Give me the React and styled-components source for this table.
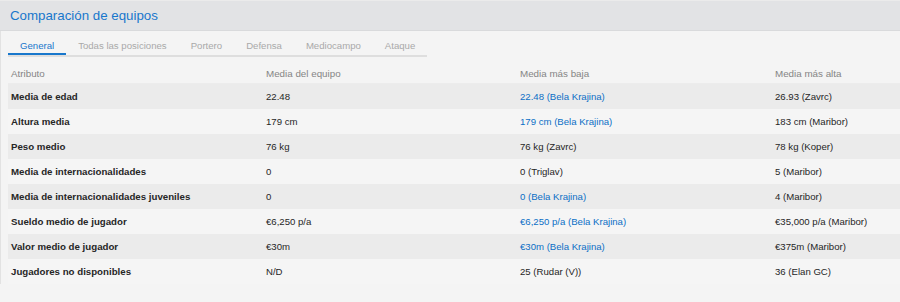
import React from 'react';
import styled, { createGlobalStyle } from 'styled-components';

const GlobalStyle = createGlobalStyle`
  html, body { margin: 0; padding: 0; background: #f4f4f4; }
  body { font-family: "Liberation Sans", Arial, sans-serif; }
`;

const tabs = ['General', 'Todas las posiciones', 'Portero', 'Defensa', 'Mediocampo', 'Ataque'];

const rows = [
  { attr: 'Media de edad', team: '22.48', low: '22.48 (Bela Krajina)', lowMine: true, high: '26.93 (Zavrc)' },
  { attr: 'Altura media', team: '179 cm', low: '179 cm (Bela Krajina)', lowMine: true, high: '183 cm (Maribor)' },
  { attr: 'Peso medio', team: '76 kg', low: '76 kg (Zavrc)', high: '78 kg (Koper)' },
  { attr: 'Media de internacionalidades', team: '0', low: '0 (Triglav)', high: '5 (Maribor)' },
  { attr: 'Media de internacionalidades juveniles', team: '0', low: '0 (Bela Krajina)', lowMine: true, high: '4 (Maribor)' },
  { attr: 'Sueldo medio de jugador', team: '€6,250 p/a', low: '€6,250 p/a (Bela Krajina)', lowMine: true, high: '€35,000 p/a (Maribor)' },
  { attr: 'Valor medio de jugador', team: '€30m', low: '€30m (Bela Krajina)', lowMine: true, high: '€375m (Maribor)' },
  { attr: 'Jugadores no disponibles', team: 'N/D', low: '25 (Rudar (V))', high: '36 (Elan GC)' },
];

export default function App() {
  return (
    <Panel>
      <GlobalStyle />
      <Header>
        <Title>Comparación de equipos</Title>
      </Header>
      <Body>
        <Tabs>
          {tabs.map((t, i) => (
            <Tab key={t} $active={i === 0}>{t}</Tab>
          ))}
        </Tabs>
        <Table>
          <HeadRow>
            <HeadCell>Atributo</HeadCell>
            <HeadCell>Media del equipo</HeadCell>
            <HeadCell>Media más baja</HeadCell>
            <HeadCell>Media más alta</HeadCell>
          </HeadRow>
          {rows.map((r, i) => (
            <Row key={r.attr} $odd={i % 2 === 0}>
              <Label>{r.attr}</Label>
              <Cell>{r.team}</Cell>
              <Cell $mine={r.lowMine}>{r.low}</Cell>
              <Cell>{r.high}</Cell>
            </Row>
          ))}
        </Table>
      </Body>
    </Panel>
  );
}

const Panel = styled.div`
  width: 900px;
  height: 302px;
  background: #f4f4f4;
  border-top: 1px solid #ebebeb;
  box-sizing: border-box;
  overflow: hidden;
`;

const Header = styled.div`
  height: 29px;
  background: #e2e3e5;
  border-bottom: 1px solid #d9dadc;
  display: flex;
  align-items: center;
  padding-left: 10px;
`;

const Title = styled.h2`
  margin: 0;
  font-size: 13.3px;
  font-weight: normal;
  color: #1877cc;
`;

const Body = styled.div`
  border-left: 1px solid #e2e2e2;
  padding: 6px 0 0 7px;
`;

const Tabs = styled.div`
  display: flex;
  width: fit-content;
  border-bottom: 2px solid #dedede;
  height: 18px;
`;

const Tab = styled.div`
  padding: 0 12px;
  font-size: 9.6px;
  line-height: 17px;
  white-space: nowrap;
  color: ${p => (p.$active ? '#1877cc' : '#a9a9a9')};
  border-bottom: 2px solid ${p => (p.$active ? '#1877cc' : 'transparent')};
`;

const Table = styled.div`
  margin-top: 7px;
`;

const grid = `
  display: grid;
  grid-template-columns: 255px 254px 255px 1fr;
  padding-left: 3px;
  align-items: center;
`;

const HeadRow = styled.div`
  ${grid}
  height: 19px;
  border-bottom: 1px solid #ececec;
`;

const HeadCell = styled.div`
  font-size: 9.8px;
  color: #858585;
`;

const Row = styled.div`
  ${grid}
  height: 25px;
  background: ${p => (p.$odd ? '#ebebeb' : '#f5f5f5')};
`;

const Label = styled.div`
  font-size: 9.7px;
  font-weight: bold;
  color: #262626;
`;

const Cell = styled.div`
  font-size: 9.6px;
  color: ${p => (p.$mine ? '#0b6fc6' : '#262626')};
`;
